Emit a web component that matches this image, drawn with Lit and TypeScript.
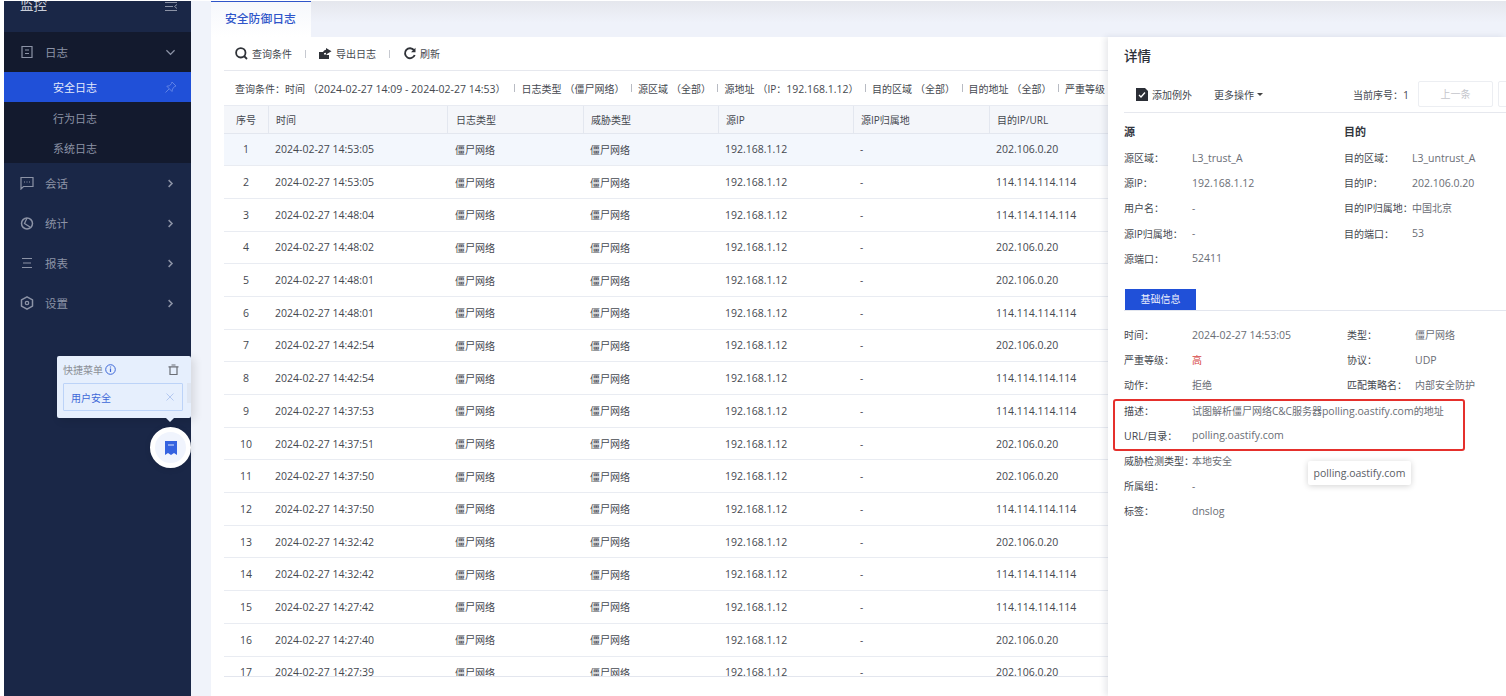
import { LitElement, html, css, svg } from "lit";
import { customElement } from "lit/decorators.js";

const rows: [string, string][] = [
  ["14:53:05", "202.106.0.20"], ["14:53:05", "114.114.114.114"], ["14:48:04", "114.114.114.114"],
  ["14:48:02", "202.106.0.20"], ["14:48:01", "202.106.0.20"], ["14:48:01", "114.114.114.114"],
  ["14:42:54", "202.106.0.20"], ["14:42:54", "114.114.114.114"], ["14:37:53", "114.114.114.114"],
  ["14:37:51", "202.106.0.20"], ["14:37:50", "202.106.0.20"], ["14:37:50", "114.114.114.114"],
  ["14:32:42", "202.106.0.20"], ["14:32:42", "114.114.114.114"], ["14:27:42", "114.114.114.114"],
  ["14:27:40", "202.106.0.20"], ["14:27:39", "202.106.0.20"],
];

const chevR = svg`<path d="M3.500 1.500 8 6l-4.500 4.500" fill="none" stroke="currentColor" stroke-width="2"/>`;
const chevD = svg`<path d="M.5 3 6 8.500 11.500 3" fill="none" stroke="currentColor" stroke-width="1.800"/>`;

@customElement("app-root")
export class AppRoot extends LitElement {
  static styles = css`
    :host { display: block; width: 1506px; height: 696px; overflow: hidden; position: relative; background: #fff;
      font-family: "Open Sans", "Noto Sans CJK SC", sans-serif; font-size: 10px; color: #45484f; }
    * { box-sizing: border-box; }
    .lat { font-size: 10.5px; }
    .layout { display: flex; height: 696px; padding: 1px 0 0 4px; }
    .side { width: 187px; flex: none; background: #1a2747; color: #8c93a6; font-size: 11.5px; overflow: hidden; display: flex; flex-direction: column; }
    .brand { flex: none; display: flex; justify-content: space-between; padding: 0 14px 0 16px; margin-top: -6px; height: 37px; align-items: flex-start; color: #c9cdd8; font-size: 13.500px; line-height: 20px; }
    .brand svg { margin-top: 7px; }
    .group { background: #131a2e; }
    .item { height: 40px; flex: none; display: flex; align-items: center; padding: 0 16px 0 16px; gap: 11px; }
    .item .lbl { flex: 1; }
    .item svg.i { width: 14px; height: 14px; flex: none; }
    .item svg.c { width: 9px; height: 9px; flex: none; }
    .sub { height: 30.400px; display: flex; align-items: center; padding: 0 14px 0 49px; justify-content: space-between; font-size: 11px; }
    .sub.on { background: #2050d8; color: #e4e9fb; }
    .gutter { width: 20px; flex: none; background: #f0f3fa; }
    .main { flex: 1; min-width: 0; display: flex; flex-direction: column; }
    .tabs { height: 36px; flex: none; background: linear-gradient(#e5e7ed, #eff2fa 60%); display: flex; }
    .tab { width: 100px; background: linear-gradient(#f6f8fc, #fff); border-top: 1px solid #2f55c9; color: #2f55c9; font-size: 11.800px; font-weight: 500; padding-left: 14px; line-height: 33px; }
    .body { flex: 1; min-height: 0; display: flex; }
    .left { width: 897px; flex: none; padding-left: 13px; display: flex; flex-direction: column; min-height: 0; }
    .toolbar { height: 34px; flex: none; border-bottom: 1px solid #e6e8ee; display: flex; align-items: center; padding-left: 11px; }
    .tool { display: flex; align-items: center; gap: 4px; color: #45484f; }
    .tool svg { width: 13px; height: 13px; }
    .bar { width: 1px; height: 8px; background: #c6c9d0; margin: 0 13px; }
    .cond { height: 34px; flex: none; display: flex; align-items: center; padding-left: 11px; white-space: nowrap; overflow: hidden; }
    .cond > span { flex: none; }
    .cond .sep { width: 1px; height: 8px; background: #b8bbc3; margin: 0 6px 0 6.500px; }
    .cond .v { margin-left: 3px; }
    .cond .v.first { margin-right: 2.500px; }
    .grid { height: 572px; flex: none; border-top: 1px solid #e8ebf2; border-bottom: 1px solid #e3e6ee; overflow: hidden; }
    .row { display: grid; grid-template-columns: 44px 179px 136px 135px 135px 136px 119px; height: 32.700px; align-items: center; border-bottom: 1px solid #e9ecf2; }
    .row.sel { background: #f3f7fd; }
    .row.head { height: 27.500px; background: #f4f6fa; border-bottom: 1px solid #e3e7ef; align-items: stretch; }
    .row.head > div { display: flex; align-items: center; border-left: 1px solid #e3e7ef; }
    .row.head > div:first-child { border-left: 0; justify-content: center; padding-left: 0; }
    .row > div { padding-left: 7px; white-space: nowrap; overflow: hidden; }
    .row > div:first-child { padding-left: 0; text-align: center; }
    .row > div:nth-child(3) { padding-left: 8px; }
    .panel { flex: 1; min-width: 0; position: relative; background: #fff; box-shadow: -3px 0 6px rgba(30, 40, 70, .1); padding-left: 16px; overflow: hidden; }
    .title { font-size: 13.500px; font-weight: 500; color: #2d3038; height: 39px; padding-top: 9px; line-height: 20px; }
    .actions { height: 37px; border-bottom: 1px solid #e6e8ee; display: flex; align-items: center; padding: 0 0 0 12px; white-space: nowrap; }
    .actions svg.add { width: 12px; height: 13px; margin-right: 4px; flex: none; }
    .more { margin-left: 22px; display: flex; align-items: center; gap: 3px; }
    .caret { width: 0; height: 0; border: 3px solid transparent; border-top-color: #444; border-bottom: 0; }
    .seq { margin-left: 90px; }
    .pgbtn { width: 75px; height: 26px; flex: none; border: 1px solid #eceef2; border-radius: 2px; margin-left: 9px; color: #c4c6cc; text-align: center; line-height: 24px; }
    .pgbtn.next { margin-left: 5px; }
    .sec { font-size: 11px; font-weight: 700; color: #33363e; line-height: 16px; margin-bottom: 5px; }
    .two { display: grid; grid-template-columns: 220px 1fr; padding-top: 11px; }
    .kv { display: grid; grid-template-columns: 68px 1fr; height: 25.200px; align-items: center; white-space: nowrap; }
    .kv > span:first-child { color: #45484f; }
    .kv > span:last-child { color: #6a6d75; }
    .kv > span.red { color: #d64545; }
    .heads { margin-bottom: 8px; }
    .tabline { margin-top: 18px; height: 22px; border-bottom: 1px solid #e3e6ee; }
    .tabon { width: 71px; height: 21px; background: #2050d8; color: #eef1fc; text-align: center; line-height: 21px; margin-left: 1px; }
    .info { padding-top: 11px; }
    .infotwo { display: grid; grid-template-columns: 223px 1fr; }
    .redbox { position: absolute; left: 5px; top: 362px; width: 352px; height: 52px; border: 2px solid #e5302c; border-radius: 3px; }
    .tip { position: absolute; left: 200px; top: 424px; height: 24px; width: 103px; background: #fff; box-shadow: 0 1px 6px rgba(0, 0, 0, .18); border-radius: 2px; line-height: 24px; text-align: center; color: #5b5e66; }
    .quick { position: absolute; left: 57px; top: 356px; width: 134px; height: 62px; background: #e6effd; border-radius: 2px; box-shadow: 3px 2px 10px rgba(0, 0, 0, .12); padding: 0 6px; }
    .quick::after { content: ""; position: absolute; left: 108px; bottom: -4px; border: 5px solid transparent; border-top-color: #e6effd; border-bottom: 0; }
    .quick::before { content: ""; position: absolute; right: 0; top: 27px; width: 4px; height: 20px; background: #dfe6f2; }
    .qhead { height: 27px; display: flex; align-items: center; color: #8c8f97; gap: 2px; }
    .qhead svg { width: 11px; height: 11px; }
    .qhead .trash { margin-left: auto; margin-right: 6px; }
    .qitem { width: 120px; height: 28px; border: 1px solid #bcd3f8; border-radius: 1px; display: flex; align-items: center; justify-content: space-between; padding: 0 8px 0 7px; color: #3d67d8; }
    .qitem svg { width: 8px; height: 8px; }
    .fab { position: absolute; left: 150px; top: 427px; width: 41px; height: 41px; border-radius: 50%; background: #f0f4fd; border: 5px solid #fff; display: flex; align-items: center; justify-content: center; box-shadow: 0 1px 6px rgba(0, 0, 0, .1); }
    .fab svg { width: 12px; height: 14px; }
  `;

  private kv(k: unknown, v: unknown, cls = "") {
    return html`<div class="kv"><span>${k}</span><span class=${cls}>${v}</span></div>`;
  }

  render() {
    const lat = (t: string) => html`<span class="lat">${t}</span>`;
    return html`
      <div class="layout">
        <aside class="side">
          <div class="brand"><span>监控</span>
            <svg width="12" height="9" viewBox="0 0 12 9"><path d="M0 .5h12M0 4.500h8M0 8.500h12M12 2.500 9.500 4.500 12 6.500" fill="none" stroke="#8c93a6"/></svg>
          </div>
          <div class="group">
            <div class="item">
              <svg class="i" viewBox="0 0 14 14"><path d="M2 1.500h10v11H2zM5 5h4M5 8.500h4" fill="none" stroke="currentColor" stroke-width="1.200"/></svg>
              <span class="lbl">日志</span>
              <svg class="c" viewBox="0 0 12 12">${chevD}</svg>
            </div>
            <div class="sub on"><span>安全日志</span>
              <svg width="13" height="13" viewBox="0 0 13 13"><path d="M8 1l4 4-1.500.5L8.500 8l-.5 2.500L2.800 5.200 5.500 4.800 7.500 2.500zM5 8l-3.500 3.500" fill="none" stroke="#5f82e6"/></svg>
            </div>
            <div class="sub">行为日志</div>
            <div class="sub">系统日志</div>
          </div>
          <div class="item">
            <svg class="i" viewBox="0 0 14 14"><path d="M1 1.500h12v9H3.500L1 13zM4 6h1M6.500 6h1M9 6h1" fill="none" stroke="currentColor" stroke-width="1.200"/></svg>
            <span class="lbl">会话</span><svg class="c" viewBox="0 0 12 12">${chevR}</svg>
          </div>
          <div class="item">
            <svg class="i" viewBox="0 0 14 14"><circle cx="7" cy="7.500" r="5.500" fill="none" stroke="currentColor" stroke-width="1.500"/><path d="M7 2l-2.500 5.500L10 11" fill="none" stroke="currentColor" stroke-width="1.300"/></svg>
            <span class="lbl">统计</span><svg class="c" viewBox="0 0 12 12">${chevR}</svg>
          </div>
          <div class="item">
            <svg class="i" viewBox="0 0 14 14"><path d="M2 2.500h10M3 7h8M2 11.500h10" fill="none" stroke="currentColor"/></svg>
            <span class="lbl">报表</span><svg class="c" viewBox="0 0 12 12">${chevR}</svg>
          </div>
          <div class="item">
            <svg class="i" viewBox="0 0 14 14"><path d="M7 .8 12.500 3.900v6.200L7 13.200 1.500 10.100V3.900z" fill="none" stroke="currentColor" stroke-width="1.500" stroke-linejoin="round"/><circle cx="7" cy="7" r="1.700" fill="none" stroke="currentColor" stroke-width="1.300"/></svg>
            <span class="lbl">设置</span><svg class="c" viewBox="0 0 12 12">${chevR}</svg>
          </div>
        </aside>
        <div class="gutter"></div>
        <main class="main">
          <div class="tabs"><div class="tab">安全防御日志</div></div>
          <div class="body">
            <section class="left">
              <div class="toolbar">
                <span class="tool"><svg viewBox="0 0 13 13"><circle cx="5.800" cy="5.800" r="4.700" fill="none" stroke="#2f3238" stroke-width="1.800"/><path d="M9 9l3 3" stroke="#2f3238" stroke-width="1.800"/></svg>查询条件</span>
                <span class="bar"></span>
                <span class="tool"><svg viewBox="0 0 13 13"><path d="M0 5h5v2.500h3V12H0z" fill="#2f3238"/><path d="M7 1l5.500 3.200L7 7.500V5.700C5 5.700 4 6.500 3.500 8c0-3 1.300-5 3.500-5.200z" fill="#2f3238"/><path d="M10 8v4H8V8z" fill="#2f3238"/></svg>导出日志</span>
                <span class="bar"></span>
                <span class="tool"><svg viewBox="0 0 13 13"><path d="M11 3.200A5 5 0 1 0 11.700 8" fill="none" stroke="#2f3238" stroke-width="1.900"/><path d="M12.500 .8v4.500H8z" fill="#2f3238"/></svg>刷新</span>
              </div>
              <div class="cond">
                <span>查询条件：时间</span><span class="v first">（${lat("2024-02-27 14:09 - 2024-02-27 14:53")}）</span><span class="sep"></span>
                <span>日志类型</span><span class="v">（僵尸网络）</span><span class="sep"></span>
                <span>源区域</span><span class="v">（全部）</span><span class="sep"></span>
                <span>源地址</span><span class="v">（IP：${lat("192.168.1.12")}）</span><span class="sep"></span>
                <span>目的区域</span><span class="v">（全部）</span><span class="sep"></span>
                <span>目的地址</span><span class="v">（全部）</span><span class="sep"></span>
                <span>严重等级</span>
              </div>
              <div class="grid">
                <div class="row head"><div>序号</div><div>时间</div><div>日志类型</div><div>威胁类型</div><div>源IP</div><div>源IP归属地</div><div>目的IP/URL</div></div>
                ${rows.map(([t, ip], i) => html`
                  <div class="row ${i === 0 ? "sel" : ""}">
                    <div class="lat">${i + 1}</div>
                    <div class="lat">2024-02-27 ${t}</div>
                    <div>僵尸网络</div><div>僵尸网络</div>
                    <div class="lat">192.168.1.12</div>
                    <div>-</div>
                    <div class="lat">${ip}</div>
                  </div>`)}
              </div>
            </section>
            <section class="panel">
              <div class="title">详情</div>
              <div class="actions">
                <svg class="add" viewBox="0 0 12 13"><path d="M0 0h9l3 3v10H0z" fill="#2b2e36"/><path d="M3 7l2 2 4-4.500" fill="none" stroke="#fff" stroke-width="1.300"/></svg>
                <span>添加例外</span>
                <span class="more">更多操作<span class="caret"></span></span>
                <span class="seq">当前序号：${lat("1")}</span>
                <span class="pgbtn">上一条</span><span class="pgbtn next"></span>
              </div>
              <div class="two heads">
                <div>
                  <div class="sec">源</div>
                  ${this.kv("源区域：", lat("L3_trust_A"))}
                  ${this.kv("源IP：", lat("192.168.1.12"))}
                  ${this.kv("用户名：", "-")}
                  ${this.kv("源IP归属地：", "-")}
                  ${this.kv("源端口：", lat("52411"))}
                </div>
                <div>
                  <div class="sec">目的</div>
                  ${this.kv("目的区域：", lat("L3_untrust_A"))}
                  ${this.kv("目的IP：", lat("202.106.0.20"))}
                  ${this.kv("目的IP归属地：", "中国北京")}
                  ${this.kv("目的端口：", lat("53"))}
                </div>
              </div>
              <div class="tabline"><div class="tabon">基础信息</div></div>
              <div class="info">
                <div class="infotwo">
                  ${this.kv("时间：", lat("2024-02-27 14:53:05"))}${this.kv("类型：", "僵尸网络")}
                  ${this.kv("严重等级：", "高", "red")}${this.kv("协议：", lat("UDP"))}
                  ${this.kv("动作：", "拒绝")}${this.kv("匹配策略名：", "内部安全防护")}
                </div>
                ${this.kv("描述：", html`试图解析僵尸网络C&C服务器${lat("polling.oastify.com")}的地址`)}
                ${this.kv(html`${lat("URL")}/目录：`, lat("polling.oastify.com"))}
                ${this.kv("威胁检测类型：", "本地安全")}
                ${this.kv("所属组：", "-")}
                ${this.kv("标签：", lat("dnslog"))}
              </div>
              <div class="redbox"></div>
              <div class="tip lat">polling.oastify.com</div>
            </section>
          </div>
        </main>
      </div>
      <div class="quick">
        <div class="qhead"><span>快捷菜单</span>
          <svg viewBox="0 0 11 11"><circle cx="5.500" cy="5.500" r="4.800" fill="none" stroke="#3d67d8"/><path d="M5.500 4.500v3.500M5.500 2.500v1" stroke="#3d67d8" stroke-width="1.200"/></svg>
          <svg class="trash" viewBox="0 0 11 11"><path d="M3.500 1h4M.5 2.800h10M2 3v7.500h7V3" fill="none" stroke="#6b6e76" stroke-width="1.200"/></svg>
        </div>
        <div class="qitem"><span>用户安全</span><svg viewBox="0 0 8 8"><path d="M.5.500l7 7M7.500.500l-7 7" stroke="#b4c8f0"/></svg></div>
      </div>
      <div class="fab"><svg viewBox="0 0 12 14"><path d="M0 0h12v14L9 12 6 14 3 12 0 14z" fill="#3563e0"/><path d="M3 4h6" stroke="#dfe8fb"/></svg></div>
    `;
  }
}
